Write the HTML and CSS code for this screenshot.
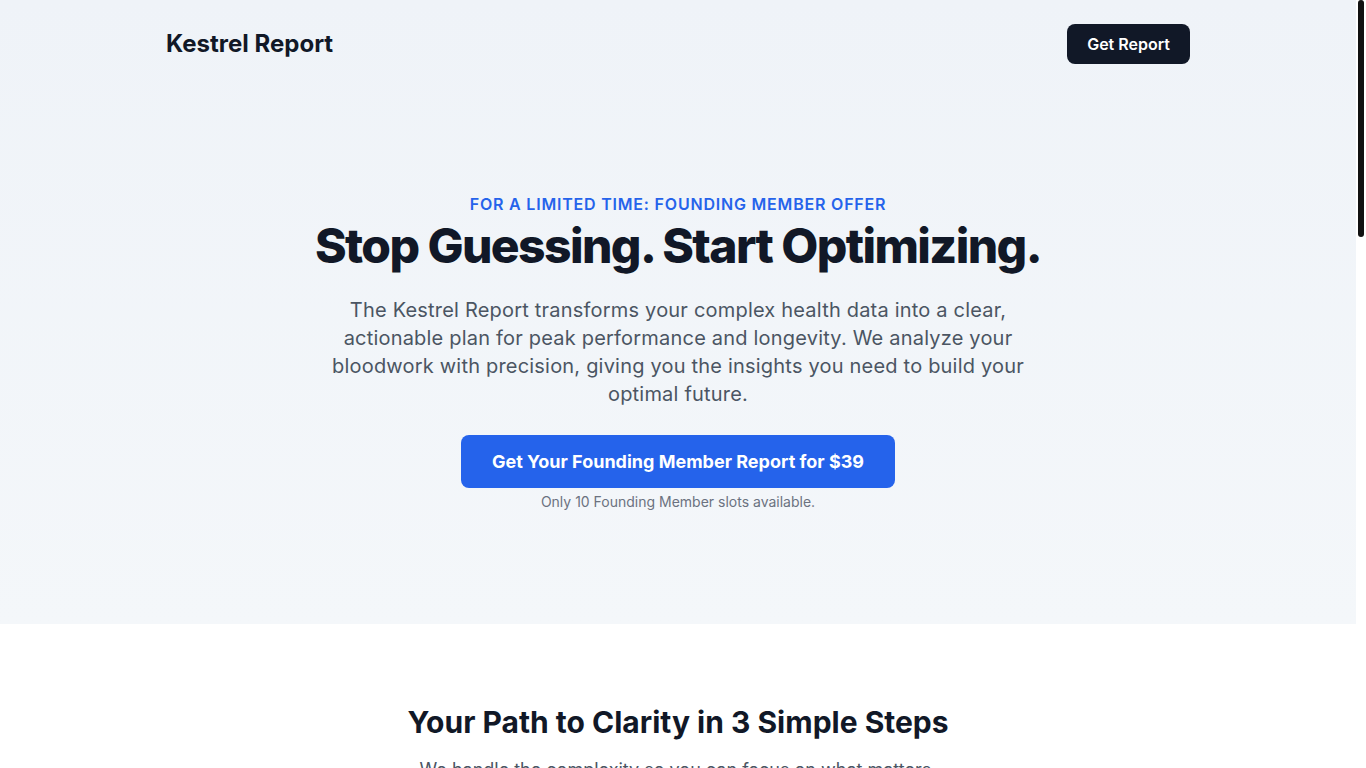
FILE: index.html
```html
<!DOCTYPE html>
<html lang="en">
<head>
<meta charset="utf-8">
<title>Kestrel Report</title>
<link rel="stylesheet" href="styles.css">
</head>
<body>
<div class="scroll-thumb" aria-hidden="true"></div>
<header class="hero">
  <nav class="nav container">
    <div class="logo">Kestrel Report</div>
    <a class="nav-btn" href="#">Get Report</a>
  </nav>
  <section class="hero-body container">
    <p class="eyebrow">For a limited time: Founding Member Offer</p>
    <h1 class="hero-title">Stop Guessing. Start Optimizing.</h1>
    <p class="hero-text">The Kestrel Report transforms your complex health data into a clear, actionable plan for peak performance and longevity. We analyze your bloodwork with precision, giving you the insights you need to build your optimal future.</p>
    <a class="cta" href="#">Get Your Founding Member Report for $39</a>
    <p class="note">Only 10 Founding Member slots available.</p>
  </section>
</header>

<section class="steps container">
  <h2 class="section-title">Your Path to Clarity in 3 Simple Steps</h2>
  <p class="section-sub">We handle the complexity so you can focus on what matters.</p>
  <div class="step-grid">
    <div class="step"><div class="step-num">1</div><h3>Upload Your Bloodwork</h3><p>Securely upload your recent lab results in minutes.</p></div>
    <div class="step"><div class="step-num">2</div><h3>We Analyze</h3><p>Our experts review every marker against optimal ranges.</p></div>
    <div class="step"><div class="step-num">3</div><h3>Get Your Plan</h3><p>Receive a clear, actionable report tailored to you.</p></div>
  </div>
</section>

<section class="features">
  <div class="container">
    <h2 class="section-title">What's Inside Your Report</h2>
    <p class="section-sub">Everything you need to understand and improve your health.</p>
    <div class="feature-grid">
      <div class="feature"><h3>Optimal Ranges</h3><p>See where you stand against performance-focused targets, not just "normal".</p></div>
      <div class="feature"><h3>Clear Explanations</h3><p>Plain-language summaries of what each marker means for you.</p></div>
      <div class="feature"><h3>Action Plan</h3><p>Nutrition, lifestyle and supplement guidance prioritized by impact.</p></div>
      <div class="feature"><h3>Retest Guidance</h3><p>Know exactly what to measure next and when.</p></div>
    </div>
  </div>
</section>

<section class="pricing container">
  <h2 class="section-title">Founding Member Pricing</h2>
  <p class="section-sub">Lock in the lowest price we will ever offer.</p>
  <div class="price-card">
    <div class="price">$39</div>
    <p>One complete Kestrel Report</p>
    <a class="cta" href="#">Claim Your Spot</a>
  </div>
</section>

<footer class="footer">
  <div class="container footer-inner">© 2024 Kestrel Report. All rights reserved.</div>
</footer>
</body>
</html>
```

FILE: styles.css
```css
* { box-sizing: border-box; }
html { background: #fff; }

body {
  margin: 0 10px 0 0;
  font-family: Inter, "Noto Sans", sans-serif;
  color: #111827;
  background: #fff;
}
a { text-decoration: none; }
p, h1, h2, h3 { margin: 0; }

.scroll-thumb {
  position: fixed;
  top: 0;
  right: 2px;
  width: 6px;
  height: 237px;
  background: #111;
  border-radius: 3px;
  z-index: 10;
}

.container { width: 1024px; margin: 0 auto; }

.hero {
  background: linear-gradient(180deg, #eff3f8 0%, #f4f7fa 100%);
  padding-bottom: 112px;
}
.nav {
  display: flex;
  justify-content: space-between;
  align-items: center;
  padding-top: 24px;
}
.logo { font-size: 24px; font-weight: 700; line-height: 40px; }
.nav-btn {
  background: #111827;
  color: #fff;
  font-size: 16px;
  font-weight: 600;
  line-height: 24px;
  padding: 8px 20px;
  border-radius: 8px;
}

.hero-body {
  display: flex;
  flex-direction: column;
  align-items: center;
  text-align: center;
  padding-top: 128px;
}
.eyebrow {
  color: #2563eb;
  font-size: 16px;
  font-weight: 600;
  line-height: 24px;
  text-transform: uppercase;
  letter-spacing: 0.05em;
}
.hero-title {
  margin-top: 6px;
  font-size: 48px;
  line-height: 48px;
  font-weight: 800;
  letter-spacing: -0.033em;
}
.hero-text {
  margin-top: 26px;
  max-width: 720px;
  font-size: 20px;
  line-height: 28px;
  letter-spacing: 0.01em;
  color: #4b5563;
}
.cta {
  margin-top: 27px;
  background: #2563eb;
  color: #fff;
  font-size: 18px;
  font-weight: 700;
  line-height: 29px;
  padding: 12px 31px;
  border-radius: 8px;
}
.note {
  margin-top: 4px;
  font-size: 14px;
  line-height: 20px;
  color: #6b7280;
}

.steps { padding: 80px 0; text-align: center; }
.section-title { font-size: 30px; line-height: 36px; font-weight: 700; }
.section-sub { margin-top: 16px; font-size: 18px; line-height: 28px; color: #4b5563; }
.step-grid { margin-top: 56px; display: grid; grid-template-columns: repeat(3, 1fr); gap: 32px; }
.step { padding: 32px; border: 1px solid #e5e7eb; border-radius: 12px; }
.step-num { width: 48px; height: 48px; margin: 0 auto 20px; border-radius: 50%; background: #dbeafe; color: #2563eb; font-weight: 700; font-size: 20px; line-height: 48px; }
.step h3, .feature h3 { font-size: 20px; line-height: 28px; font-weight: 600; }
.step p, .feature p { margin-top: 8px; color: #4b5563; font-size: 16px; line-height: 24px; }

.features { background: #f4f7fa; padding: 96px 0; text-align: center; }
.feature-grid { margin-top: 56px; display: grid; grid-template-columns: repeat(2, 1fr); gap: 32px; text-align: left; }
.feature { background: #fff; padding: 32px; border-radius: 12px; min-height: 160px; }

.pricing { padding: 96px 0; text-align: center; display: flex; flex-direction: column; align-items: center; }
.price-card { margin-top: 48px; width: 400px; padding: 40px; border: 1px solid #e5e7eb; border-radius: 12px; display: flex; flex-direction: column; align-items: center; gap: 8px; }
.price { font-size: 48px; font-weight: 800; line-height: 56px; }
.price-card p { color: #4b5563; }

.footer { background: #111827; color: #9ca3af; padding: 48px 0; font-size: 14px; text-align: center; }
```
